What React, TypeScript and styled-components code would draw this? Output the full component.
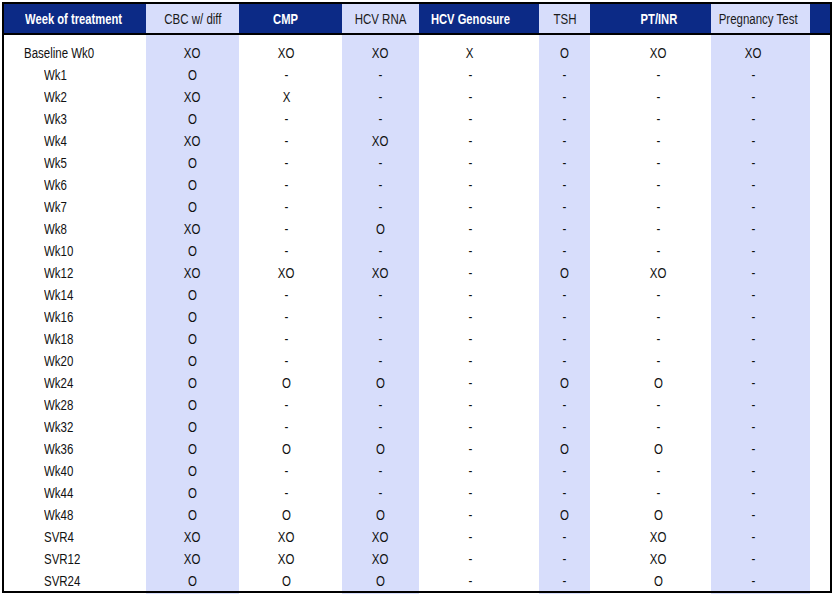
import React from "react";
import styled, { createGlobalStyle } from "styled-components";

const DARK = "#0c2a86";
const LIGHT = "#d7ddfb";

type Col = { name: string; width: number; shaded: boolean; head: number; body: number };

// shaded columns carry the light fill, others get the dark header
const columns: Col[] = [
  { name: "CBC w/ diff", width: 93, shaded: true, head: 0, body: 0 },
  { name: "CMP", width: 103, shaded: false, head: -5, body: -4 },
  { name: "HCV RNA", width: 77, shaded: true, head: 0, body: 0 },
  { name: "HCV Genosure", width: 120, shaded: false, head: -9, body: -9 },
  { name: "TSH", width: 51, shaded: true, head: 0, body: 0 },
  { name: "PT/INR", width: 121, shaded: false, head: 8, body: 8 },
  { name: "Pregnancy Test", width: 99, shaded: true, head: -2, body: -7 },
];

const rows: [string, string[]][] = [
  ["Baseline Wk0", ["XO", "XO", "XO", "X", "O", "XO", "XO"]],
  ["Wk1", ["O", "-", "-", "-", "-", "-", "-"]],
  ["Wk2", ["XO", "X", "-", "-", "-", "-", "-"]],
  ["Wk3", ["O", "-", "-", "-", "-", "-", "-"]],
  ["Wk4", ["XO", "-", "XO", "-", "-", "-", "-"]],
  ["Wk5", ["O", "-", "-", "-", "-", "-", "-"]],
  ["Wk6", ["O", "-", "-", "-", "-", "-", "-"]],
  ["Wk7", ["O", "-", "-", "-", "-", "-", "-"]],
  ["Wk8", ["XO", "-", "O", "-", "-", "-", "-"]],
  ["Wk10", ["O", "-", "-", "-", "-", "-", "-"]],
  ["Wk12", ["XO", "XO", "XO", "-", "O", "XO", "-"]],
  ["Wk14", ["O", "-", "-", "-", "-", "-", "-"]],
  ["Wk16", ["O", "-", "-", "-", "-", "-", "-"]],
  ["Wk18", ["O", "-", "-", "-", "-", "-", "-"]],
  ["Wk20", ["O", "-", "-", "-", "-", "-", "-"]],
  ["Wk24", ["O", "O", "O", "-", "O", "O", "-"]],
  ["Wk28", ["O", "-", "-", "-", "-", "-", "-"]],
  ["Wk32", ["O", "-", "-", "-", "-", "-", "-"]],
  ["Wk36", ["O", "O", "O", "-", "O", "O", "-"]],
  ["Wk40", ["O", "-", "-", "-", "-", "-", "-"]],
  ["Wk44", ["O", "-", "-", "-", "-", "-", "-"]],
  ["Wk48", ["O", "O", "O", "-", "O", "O", "-"]],
  ["SVR4", ["XO", "XO", "XO", "-", "-", "XO", "-"]],
  ["SVR12", ["XO", "XO", "XO", "-", "-", "XO", "-"]],
  ["SVR24", ["O", "O", "O", "-", "-", "O", "-"]],
];

const template = `142px ${columns.map((c) => c.width + "px").join(" ")} 20px`;

const Global = createGlobalStyle`
  html, body { margin: 0; padding: 0; background: #fff; }
  body { font-family: "Liberation Sans Narrow", "Arial Narrow", "Liberation Sans", Arial, sans-serif; }
`;

const Page = styled.div`
  width: 834px;
  height: 594px;
  padding: 2px 0 0 2px;
  box-sizing: border-box;
  overflow: hidden;
`;

const Frame = styled.div`
  width: 830px;
  box-sizing: border-box;
  border: 2px solid #000;
`;

const Grid = styled.div<{ $h: number }>`
  display: grid;
  grid-template-columns: ${template};
  height: ${(p) => p.$h}px;
`;

const HeadRow = styled(Grid)`
  border-bottom: 2px solid #000;
`;

const Narrow = styled.span<{ $bold?: boolean; $left?: boolean }>`
  display: inline-block;
  white-space: nowrap;
  font-size: 14px;
  font-weight: ${(p) => (p.$bold ? 700 : 400)};
  transform: scaleX(${(p) => (p.$bold ? 0.8 : 0.82)});
  transform-origin: ${(p) => (p.$left ? "left center" : "center")};
`;

const HeadCell = styled.div<{ $shaded: boolean; $shift: number }>`
  display: flex;
  align-items: center;
  justify-content: center;
  background: ${(p) => (p.$shaded ? LIGHT : DARK)};
  color: ${(p) => (p.$shaded ? "#1a1a1a" : "#fff")};
  padding-left: ${(p) => Math.max(0, p.$shift * 2)}px;
  padding-right: ${(p) => Math.max(0, -p.$shift * 2)}px;
`;

const Label = styled.div<{ $indent: number }>`
  display: flex;
  align-items: center;
  padding: 2px 0 0 ${(p) => p.$indent}px;
  color: #111;
`;

const Cell = styled.div<{ $shaded: boolean; $shift: number }>`
  display: flex;
  align-items: center;
  justify-content: center;
  padding-top: 2px;
  background: ${(p) => (p.$shaded ? LIGHT : "transparent")};
  color: #111;
  padding-left: ${(p) => Math.max(0, p.$shift * 2)}px;
  padding-right: ${(p) => Math.max(0, -p.$shift * 2)}px;
`;

const Shade = styled.div<{ $shaded: boolean }>`
  background: ${(p) => (p.$shaded ? LIGHT : "transparent")};
`;

const Tail = styled(Grid)`
  padding-left: 2px;
`;

function ShadeRow({ h, as }: { h: number; as?: typeof Tail }) {
  const Row = as ?? Grid;
  return (
    <Row $h={h}>
      <Shade $shaded={false} />
      {columns.map((c) => (
        <Shade key={c.name} $shaded={c.shaded} />
      ))}
      <Shade $shaded={false} />
    </Row>
  );
}

export default function App() {
  return (
    <>
      <Global />
      <Page>
        <Frame>
          <HeadRow $h={29}>
            <HeadCell $shaded={false} $shift={-1}>
              <Narrow $bold>Week of treatment</Narrow>
            </HeadCell>
            {columns.map((c) => (
              <HeadCell key={c.name} $shaded={c.shaded} $shift={c.head}>
                <Narrow $bold={!c.shaded}>{c.name}</Narrow>
              </HeadCell>
            ))}
            <HeadCell $shaded={false} $shift={0} />
          </HeadRow>
          <ShadeRow h={6} />
          {rows.map(([label, vals], i) => (
            <Grid $h={22} key={label}>
              <Label $indent={i === 0 ? 20 : 40}>
                <Narrow $left>{label}</Narrow>
              </Label>
              {vals.map((v, j) => (
                <Cell key={j} $shaded={columns[j].shaded} $shift={columns[j].body}>
                  <Narrow>{v}</Narrow>
                </Cell>
              ))}
              <Cell $shaded={false} $shift={0} />
            </Grid>
          ))}
        </Frame>
        <ShadeRow h={4} as={Tail} />
      </Page>
    </>
  );
}
